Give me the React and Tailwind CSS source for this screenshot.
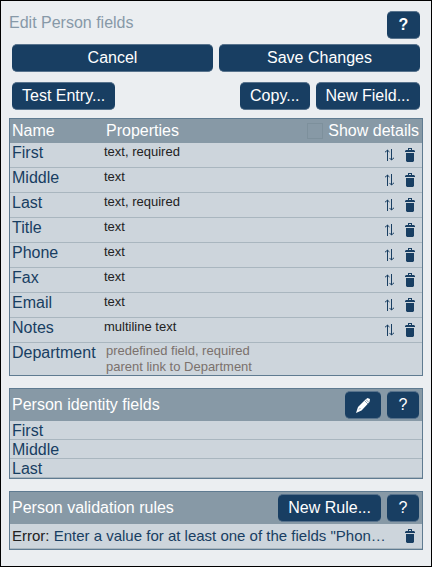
const fields = [
  { name: "First", properties: "text, required" },
  { name: "Middle", properties: "text" },
  { name: "Last", properties: "text, required" },
  { name: "Title", properties: "text" },
  { name: "Phone", properties: "text" },
  { name: "Fax", properties: "text" },
  { name: "Email", properties: "text" },
  { name: "Notes", properties: "multiline text" },
];

const identityFields = ["First", "Middle", "Last"];

const TrashIcon = () => (
  <svg viewBox="0 0 10 14" className="w-[10px] h-[14px]" fill="currentColor" aria-hidden="true">
    <path d="M3 2V0h4v2h2l1 1v1H0V3l1-1h2Zm1-1v1h2V1H4Z" fillRule="evenodd" />
    <path d="M1 5h8v7.500L8.200 14H1.800L1 12.500V5Z" />
  </svg>
);

const MoveIcon = () => (
  <svg viewBox="0 0 12 12" className="w-3 h-3" fill="none" stroke="currentColor" aria-hidden="true">
    <path d="M3.500 12V1M1 3.200l2.500-2L5.500 3" />
    <path d="M7.500 0v11M5.500 9l2 2L10 8.800" />
  </svg>
);

const PencilIcon = () => (
  <svg viewBox="0 0 14 15" className="w-[14px] h-[15px]" aria-hidden="true">
    <path d="M0 15 2 9 9.500 1.500 11.500 0 14 1 13.500 4 5.500 12.500Z" fill="currentColor" />
    <path d="m8.500 2.500 3.500 3.500M10 1.500l3 3M3 11.500l1.500-1.500" stroke="#183e62" strokeWidth=".5" />
  </svg>
);

const Button = ({ children, className = "px-[10px]", ...props }) => (
  <button
    type="button"
    className={`h-7 rounded-[5px] border-y border-[#58738d] bg-[#183e62] text-white text-center whitespace-nowrap leading-[26px] ${className}`}
    {...props}
  >
    {children}
  </button>
);

const Panel = ({ title, actions, children }) => (
  <section className="mt-3 border border-[#5f7b91] bg-[#cdd5dc]">
    <header className="flex items-center bg-[#8799a6] h-8 pl-[2px] pr-[3px] text-white">
      <h2 className="flex-1">{title}</h2>
      <div className="flex gap-[6px]">{actions}</div>
    </header>
    {children}
  </section>
);

const App = () => {
  return (
    <main
      className="min-h-screen border border-black bg-[#ebeef1] px-2 pt-[10px] pb-4 text-[16px] leading-[18px] text-[#183e62]"
      style={{ fontFamily: '"Liberation Sans", Arial, sans-serif' }}
    >
      <div className="flex items-start justify-between pr-[3px]">
        <h1 className="pt-[3px] text-[#8799a8]">Edit Person fields</h1>
        <Button className="w-[33px] font-bold" aria-label="Help">?</Button>
      </div>

      <div className="mt-[5px] flex gap-[6px] px-[3px]">
        <Button className="flex-1">Cancel</Button>
        <Button className="flex-1">Save Changes</Button>
      </div>

      <div className="mt-[10px] flex gap-[6px] px-[3px]">
        <Button>Test Entry...</Button>
        <span className="flex-1" />
        <Button>Copy...</Button>
        <Button>New Field...</Button>
      </div>

      {/* Fields */}
      <div className="mt-2 border border-[#5f7b91] bg-[#cdd5dc]">
        <table className="w-full border-separate border-spacing-0 text-left">
          <thead className="bg-[#8799a6] text-white">
            <tr className="h-6">
              <th className="w-[94px] pl-[2px] py-0 font-normal">Name</th>
              <th className="pl-[2px] py-0 font-normal">Properties</th>
              <th className="w-[120px] pr-[3px] py-0 font-normal">
                <label className="flex items-center justify-end gap-[5px] whitespace-nowrap">
                  <input
                    type="checkbox"
                    className="appearance-none w-4 h-4 border border-[#7d909c] checked:bg-[#183e62]"
                  />
                  Show details
                </label>
              </th>
            </tr>
          </thead>
          <tbody>
            {fields.map((field) => (
              <tr key={field.name} className="h-[25px] align-top *:border-b *:border-[#a9b6bf]">
                <td className="pl-[2px] pt-px">{field.name}</td>
                <td className="pt-px text-[13px] leading-4 text-[#222222]">{field.properties}</td>
                <td>
                  <div className="flex justify-end items-center gap-[9px] pt-[5px] pr-[7px]">
                    <button type="button" aria-label={`Move ${field.name}`}>
                      <MoveIcon />
                    </button>
                    <button type="button" aria-label={`Delete ${field.name}`}>
                      <TrashIcon />
                    </button>
                  </div>
                </td>
              </tr>
            ))}
            <tr className="align-top">
              <td className="pl-[2px] pt-px">Department</td>
              <td colSpan={2} className="pl-[2px] text-[13px] leading-4 text-[#7b716c]">
                predefined field, required
                <br />
                parent link to Department
              </td>
            </tr>
          </tbody>
        </table>
      </div>

      <Panel
        title="Person identity fields"
        actions={
          <>
            <Button className="w-9 flex items-center justify-center" aria-label="Edit identity fields">
              <PencilIcon />
            </Button>
            <Button className="w-8" aria-label="Help">?</Button>
          </>
        }
      >
        <ul>
          {identityFields.map((name) => (
            <li key={name} className="h-[19px] border-b border-[#a9b6bf] pl-[2px] leading-5">
              {name}
            </li>
          ))}
        </ul>
      </Panel>

      <Panel
        title="Person validation rules"
        actions={
          <>
            <Button>New Rule...</Button>
            <Button className="w-8" aria-label="Help">?</Button>
          </>
        }
      >
        <div className="flex items-center gap-2 h-[25px] border-b border-[#a9b6bf] pl-[2px] pr-[7px]">
          <p className="flex-1 min-w-0 truncate text-[15px]">
            <span className="text-[#222222]">Error:</span> Enter a value for at least one of the fields "Phon…
          </p>
          <button type="button" aria-label="Delete rule">
            <TrashIcon />
          </button>
        </div>
      </Panel>
    </main>
  );
};

export default App;
